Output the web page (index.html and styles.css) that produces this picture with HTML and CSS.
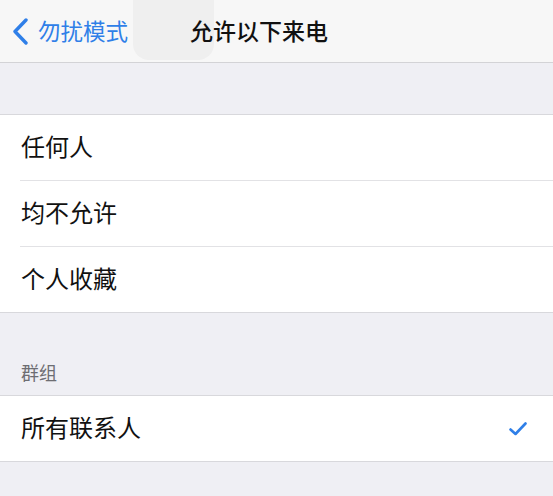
FILE: index.html
```html
<!DOCTYPE html>
<html lang="zh-CN">
<head>
<meta charset="utf-8">
<title>允许以下来电</title>
<link rel="stylesheet" href="styles.css">
</head>
<body>
<div class="nav">
  <div class="ghost"></div>
  <a class="back">
    <svg class="chev" width="16" height="27" viewBox="0 0 16 27"><path d="M14 2 L3 13.5 L14 25" fill="none" stroke="#2f7fe8" stroke-width="3.4" stroke-linecap="round" stroke-linejoin="round"/></svg>
    <span class="back-text">勿扰模式</span>
  </a>
  <div class="title">允许以下来电</div>
</div>
<div class="gap-top"></div>
<div class="group">
  <div class="row">任何人</div>
  <div class="row sep">均不允许</div>
  <div class="row sep">个人收藏</div>
</div>
<div class="header">群组</div>
<div class="group">
  <div class="row">
    <span class="label">所有联系人</span>
    <svg class="check" width="18" height="14" viewBox="0 0 18 14"><path d="M1.5 7.5 L6.5 12 L16.5 1.5" fill="none" stroke="#2f7fe8" stroke-width="2.6" stroke-linecap="round" stroke-linejoin="round"/></svg>
  </div>
</div>
</body>
</html>
```

FILE: styles.css
```css
html, body {
  margin: 0;
  padding: 0;
}
body {
  background: #efeff4;
  font-family: "Noto Sans CJK SC", "Noto Sans", sans-serif;
  width: 553px;
  height: 496px;
  overflow: hidden;
}
.nav {
  position: relative;
  height: 62px;
  background: #f7f7f7;
  border-bottom: 1px solid #d3d3d6;
  display: flex;
  align-items: center;
}
.ghost {
  position: absolute;
  left: 133px;
  top: 0;
  width: 81px;
  height: 60px;
  background: #efefef;
  border-radius: 0 0 16px 16px;
}
.back {
  position: relative;
  display: flex;
  align-items: center;
  padding-left: 12px;
  padding-bottom: 2px;
  gap: 10px;
  color: #2f7fe8;
  font-size: 22.5px;
  line-height: 1;
}
.chev {
  display: block;
  margin-top: 2px;
}
.back-text {
  display: block;
}
.title {
  position: relative;
  margin-left: 62px;
  padding-bottom: 2px;
  font-size: 23px;
  font-weight: 500;
  line-height: 1;
  color: #111;
}
.gap-top {
  height: 51px;
}
.group {
  background: #fff;
  border-top: 1px solid #d8d8dc;
  border-bottom: 1px solid #d8d8dc;
}
.row {
  box-sizing: border-box;
  height: 65px;
  display: flex;
  align-items: center;
  justify-content: space-between;
  padding: 0 26px 3px 21px;
  font-size: 24px;
  color: #111;
  line-height: 1;
}
.row.sep {
  height: 66px;
  border-top: 1px solid #e2e2e5;
  margin-left: 20px;
  padding-left: 1px;
}
.header {
  padding: 50px 0 14px 21px;
  font-size: 18px;
  line-height: 18px;
  color: #6d6d72;
}
.check {
  display: block;
  margin-top: 3px;
}
```
